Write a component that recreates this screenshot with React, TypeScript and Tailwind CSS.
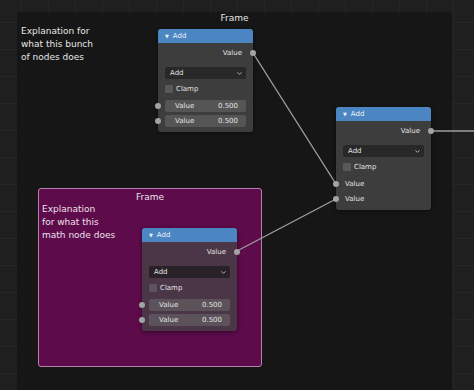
import React from "react";
import { ChevronDown } from "lucide-react";

type NodeProps = {
  pos: string;
  tinted?: boolean;
  linked?: boolean;
};

const Socket: React.FC<{ side: "left" | "right"; className?: string }> = ({ side, className }) => (
  <span
    className={
      "absolute top-1/2 -translate-y-1/2 w-[6px] h-[6px] rounded-full bg-[#a3a3a3] " +
      (side === "left" ? "-left-[3px] " : "-right-[3px] ") +
      (className ?? "")
    }
  />
);

const MathNode: React.FC<NodeProps> = ({ pos, tinted, linked }) => {
  const body = tinted ? "bg-[#4a3646]" : "bg-[#3d3d3d]";
  const field = tinted ? "bg-[#5b525a]" : "bg-[#555555]";
  const menu = tinted ? "bg-[#2a2229]" : "bg-[#282828]";
  const check = tinted ? "bg-[#5d545c]" : "bg-[#595959]";

  return (
    <div className={"absolute w-[95px] rounded-[3px] text-[7px] leading-none text-[#e2e2e2] shadow-[0_1px_4px_rgba(0,0,0,0.5)] " + body + " " + pos}>
      <div className="h-[14px] rounded-t-[3px] bg-[#4b86c2] flex items-center pl-[7px] gap-[4px] text-[#eef3f8]">
        <span className="text-[5px]">▼</span>
        <span>Add</span>
      </div>

      <div className="relative mt-[2px] h-[16px] flex items-center justify-end pr-[11px]">
        <span>Value</span>
        <Socket side="right" />
      </div>

      <div className={"mx-[7px] mt-[6px] h-[12px] rounded-[2px] flex items-center justify-between pl-[5px] pr-[3px] " + menu}>
        <span>Add</span>
        <ChevronDown size={7} strokeWidth={2.5} />
      </div>

      <div className="mx-[7px] mt-[4px] h-[12px] flex items-center gap-[3px]">
        <span className={"w-[8px] h-[8px] rounded-[1px] " + check} />
        <span>Clamp</span>
      </div>

      {linked ? (
        <>
          <div className="relative mt-[5px] h-[12px] flex items-center pl-[9px]">
            <span>Value</span>
            <Socket side="left" />
          </div>
          <div className="relative mt-[3px] h-[12px] flex items-center pl-[9px]">
            <span>Value</span>
            <Socket side="left" />
          </div>
        </>
      ) : (
        <>
          <div className="relative mt-[5px] h-[12px] flex items-center">
            <Socket side="left" />
            <div className={"mx-[7px] flex-1 h-full rounded-[2px] flex items-center justify-between pl-[10px] pr-[8px] " + field}>
              <span>Value</span>
              <span>0.500</span>
            </div>
          </div>
          <div className="relative mt-[3px] h-[12px] flex items-center">
            <Socket side="left" />
            <div className={"mx-[7px] flex-1 h-full rounded-[2px] flex items-center justify-between pl-[10px] pr-[8px] " + field}>
              <span>Value</span>
              <span>0.500</span>
            </div>
          </div>
        </>
      )}
      <div className="h-[5px]" />
    </div>
  );
};

export default function App() {
  return (
    <div
      className="relative w-[474px] h-[390px] overflow-hidden bg-[#1f1f1f] bg-[linear-gradient(#262626_1px,transparent_1px),linear-gradient(90deg,#262626_1px,transparent_1px)] bg-[size:27px_27px] bg-[position:-6px_-5px]"
      style={{ fontFamily: '"DejaVu Sans", "Liberation Sans", sans-serif' }}
    >
      {/* outer frame */}
      <div className="absolute left-[17px] top-[12px] w-[435px] h-[400px] bg-[rgba(22,22,22,0.88)] rounded-[2px] text-[#e6e6e6]">
        <div className="text-center text-[9px] leading-[12px] pt-[0px]">Frame</div>
        <div className="pl-[4px] mt-[1px] text-[9px] leading-[13px] w-[110px]">
          Explanation for
          <br />
          what this bunch
          <br />
          of nodes does
        </div>
      </div>

      {/* purple frame */}
      <div className="absolute left-[38px] top-[188px] w-[224px] h-[179px] bg-[#5e0b4b] border border-[#b880ab] rounded-[3px] text-[#ece0ea]">
        <div className="text-center text-[9px] leading-[12px] pt-[2px]">Frame</div>
        <div className="pl-[3px] mt-[0px] text-[9px] leading-[13px]">
          Explanation
          <br />
          for what this
          <br />
          math node does
        </div>
      </div>

      {/* links */}
      <svg className="absolute inset-0 pointer-events-none" width="474" height="390">
        <g stroke="#9d9d9d" strokeWidth="1.4" fill="none" strokeLinecap="round">
          <line x1="253" y1="53" x2="336" y2="184" />
          <line x1="237" y1="251" x2="336" y2="199" />
          <line x1="431" y1="131" x2="474" y2="131" />
        </g>
      </svg>

      <MathNode pos="left-[158px] top-[29px]" />
      <MathNode pos="left-[336px] top-[107px]" linked />
      <MathNode pos="left-[142px] top-[228px]" tinted />
    </div>
  );
}
